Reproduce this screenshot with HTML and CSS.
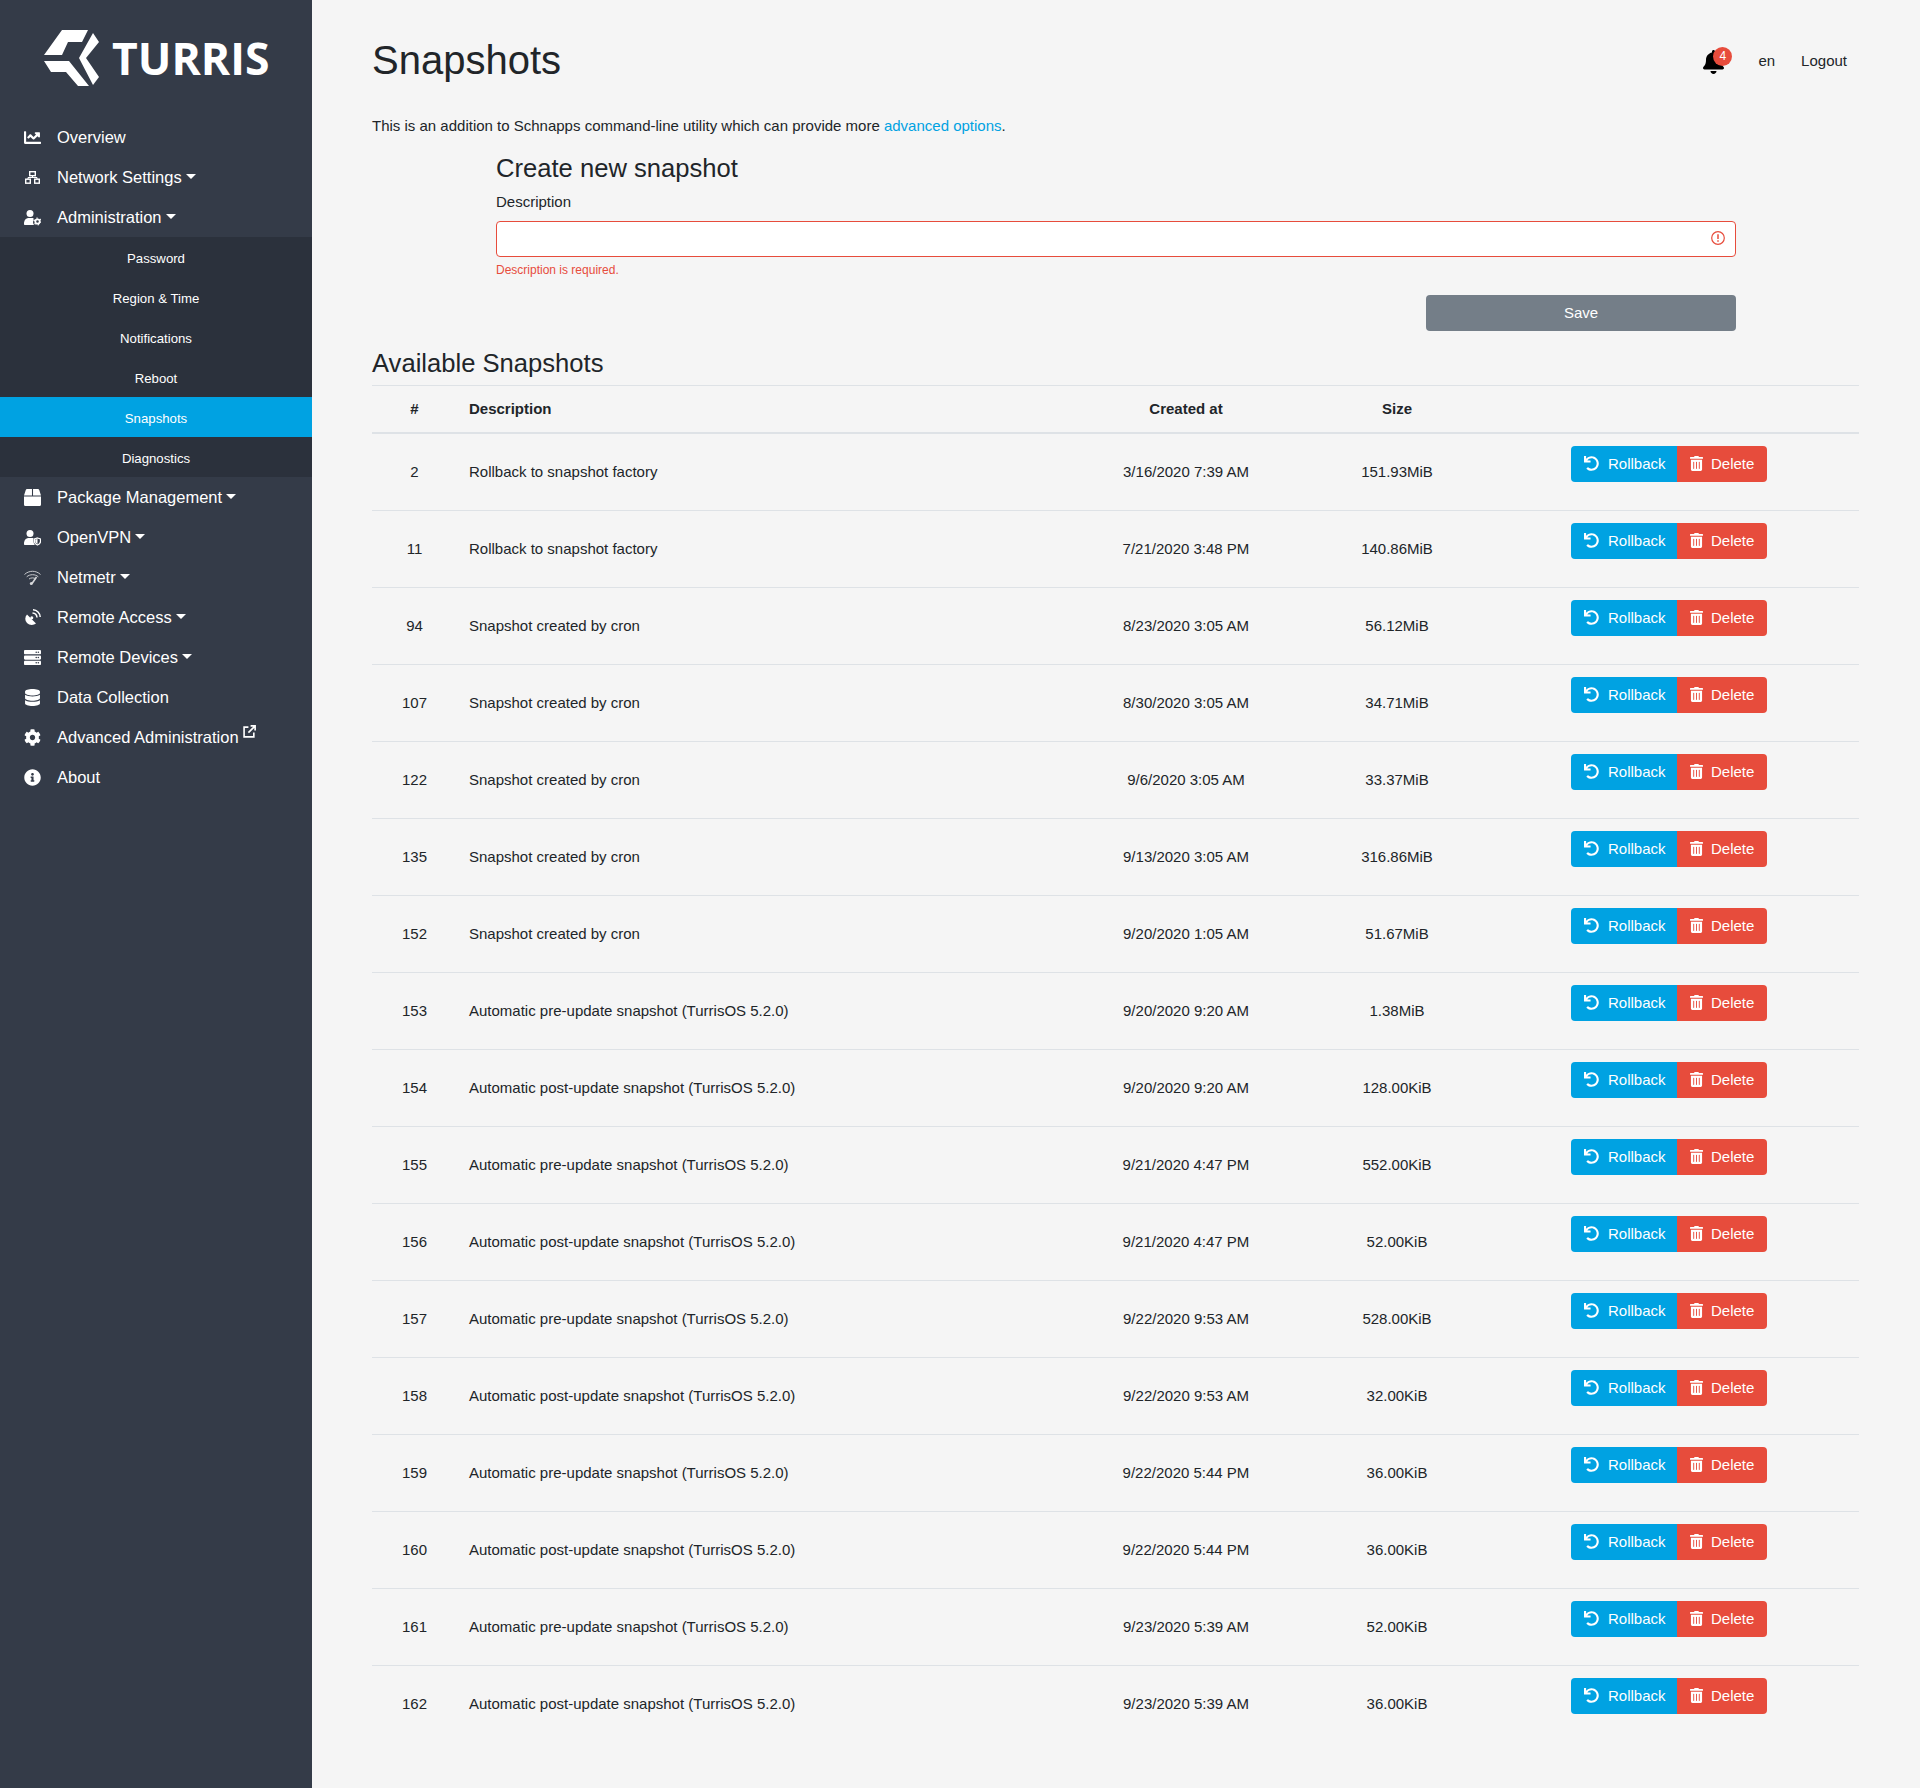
FILE: index.html
```html
<!DOCTYPE html>
<html lang="en">
<head>
    <meta charset="UTF-8">
    <title>Snapshots</title>
    <link rel="stylesheet" href="styles.css">
</head>
<body>
<svg class="sprites" width="0" height="0">
    <symbol id="i-undo" viewBox="0 0 512 512"><path d="M212.333 224.333H12c-6.627 0-12-5.373-12-12V12C0 5.373 5.373 0 12 0h48c6.627 0 12 5.373 12 12v78.112C117.773 39.279 184.26 7.47 258.175 8.007c136.906.994 246.448 111.623 246.157 248.532C504.041 393.258 393.12 504 256.333 504c-64.089 0-122.496-24.313-166.51-64.215-5.099-4.622-5.334-12.554-.467-17.42l33.967-33.967c4.474-4.474 11.662-4.717 16.401-.525C170.76 415.336 211.58 432 256.333 432c97.268 0 176-78.716 176-176 0-97.267-78.716-176-176-176-58.496 0-110.28 28.476-142.274 72.333h98.274c6.627 0 12 5.373 12 12v48c0 6.627-5.373 12-12 12z"/></symbol>
    <symbol id="i-trash" viewBox="0 0 448 512"><path d="M32 464a48 48 0 0 0 48 48h288a48 48 0 0 0 48-48V128H32zm272-256a16 16 0 0 1 32 0v224a16 16 0 0 1-32 0zm-96 0a16 16 0 0 1 32 0v224a16 16 0 0 1-32 0zm-96 0a16 16 0 0 1 32 0v224a16 16 0 0 1-32 0zM432 32H312l-9.4-18.7A24 24 0 0 0 281.1 0H166.8a23.72 23.72 0 0 0-21.4 13.3L136 32H16A16 16 0 0 0 0 48v32a16 16 0 0 0 16 16h416a16 16 0 0 0 16-16V48a16 16 0 0 0-16-16z"/></symbol>
</svg>

<aside class="sidebar">
    <a class="logo" href="#">
        <svg class="logo-mark" viewBox="0 0 56 58"><path d="M0 25L18 0H44L38 12H24L18 25Z"/><path d="M0 31H25L45 56H34L22 42H7Z"/><path d="M49 3L55 12L42 28L55 47L49 55L35 28Z"/></svg>
        <span class="logo-text">TURRIS</span>
    </a>
    <ul class="nav">
        <li><a href="#"><svg class="nav-icon" viewBox="0 0 512 512"><path d="M496 384H64V80c0-8.84-7.16-16-16-16H16C7.16 64 0 71.16 0 80v336c0 17.67 14.33 32 32 32h464c8.84 0 16-7.16 16-16v-32c0-8.84-7.16-16-16-16zM464 96H345.94c-21.38 0-32.09 25.85-16.97 40.97l32.4 32.4L288 242.75l-73.37-73.37c-12.5-12.5-32.76-12.5-45.25 0l-68.69 68.69c-6.25 6.25-6.25 16.38 0 22.63l22.62 22.62c6.25 6.25 16.38 6.25 22.63 0L192 237.25l73.37 73.37c12.5 12.5 32.76 12.5 45.25 0l96-96 32.4 32.4c15.12 15.12 40.97 4.41 40.97-16.97V112c.01-8.84-7.15-16-15.99-16z"/></svg>Overview</a></li>
        <li><a href="#" class="toggle"><svg class="nav-icon outline" viewBox="0 0 17 17" stroke="currentColor" stroke-width="1.400"><rect x="5.700" y="2.700" width="5.600" height="4"/><rect x="1.700" y="10.200" width="4.600" height="4"/><rect x="10.700" y="10.200" width="4.600" height="4"/><path stroke-width="1" d="M8.500 6.700v2M4 10V8.500h9V10"/></svg>Network Settings</a></li>
        <li><a href="#" class="toggle"><svg class="nav-icon" viewBox="0 0 17 17"><circle cx="6" cy="4.500" r="3.500"/><path d="M0 15c0-4 2-6 5-6h3c1 0 1.500.2 1.500.2v2.300c-.8 1.200-.5 3 .5 4.500H1c-.6 0-1-.4-1-1z"/><circle cx="13.500" cy="12.500" r="2.200" fill="none" stroke="currentColor" stroke-width="1.800"/><circle cx="13.500" cy="12.500" r="3.400" fill="none" stroke="currentColor" stroke-width="1.200" stroke-dasharray="1.400 2.200"/></svg>Administration</a></li>
        <li>
            <ul class="subnav">
                <li><a href="#">Password</a></li>
                <li><a href="#">Region &amp; Time</a></li>
                <li><a href="#">Notifications</a></li>
                <li><a href="#">Reboot</a></li>
                <li><a href="#" class="active">Snapshots</a></li>
                <li><a href="#">Diagnostics</a></li>
            </ul>
        </li>
        <li><a href="#" class="toggle"><svg class="nav-icon" viewBox="0 0 512 512"><path d="M509.5 184.6L458.9 32.8C452.4 13.2 434.1 0 413.4 0H272v192h238.7c-.4-2.5-.4-5-1.2-7.4zM240 0H98.6c-20.7 0-39 13.2-45.5 32.8L2.5 184.6c-.8 2.4-.8 4.9-1.2 7.4H240V0zM0 224v240c0 26.5 21.5 48 48 48h416c26.5 0 48-21.5 48-48V224H0z"/></svg>Package Management</a></li>
        <li><a href="#" class="toggle"><svg class="nav-icon" viewBox="0 0 17 17"><circle cx="6" cy="4.500" r="3.500"/><path d="M0 15c0-4 2-6 5-6h3c.8 0 1.500.2 1.500.2V12c0 1.500.5 3 1.500 4H1c-.6 0-1-.4-1-1z"/><path fill="none" stroke="currentColor" stroke-width="1.300" d="M13.500 9l3 1v2.500c0 1.500-1.300 2.800-3 3.500-1.700-.7-3-2-3-3.500V10z"/><path d="M13.500 10v5c-1-.6-2.200-1.500-2.200-2.700v-1.700z"/></svg>OpenVPN</a></li>
        <li><a href="#" class="toggle"><svg class="nav-icon outline dim" viewBox="0 0 17 17" stroke="currentColor" stroke-width=".9"><path d="M.5 5.500C5 1.200 12 1.200 16.500 5.500"/><path d="M2.700 7.800c3.200-2.800 8.400-2.800 11.600 0"/><path d="M5 10c2-1.500 5-1.500 7 0"/><path stroke-width="1.600" d="M12.500 8L8 14.500"/><circle cx="7.300" cy="14.500" r="1.500" fill="currentColor" stroke="none"/></svg>Netmetr</a></li>
        <li><a href="#" class="toggle"><svg class="nav-icon" viewBox="0 0 17 17"><path d="M3 5.500L12 14.500C9.500 16.500 5.500 16.500 3 14 .700 11.500.700 8 3 5.500z"/><circle cx="7.800" cy="8.800" r="1.500"/><path fill="none" stroke="currentColor" stroke-width="1.500" d="M8.500 4c2.500.2 4.300 2 4.500 4.500M9 .800c4 .2 7 3.200 7.200 7.200"/></svg>Remote Access</a></li>
        <li><a href="#" class="toggle"><svg class="nav-icon" viewBox="0 0 512 512"><path d="M480 160H32c-17.673 0-32-14.327-32-32V64c0-17.673 14.327-32 32-32h448c17.673 0 32 14.327 32 32v64c0 17.673-14.327 32-32 32zm-48-88c-13.255 0-24 10.745-24 24s10.745 24 24 24 24-10.745 24-24-10.745-24-24-24zm-64 0c-13.255 0-24 10.745-24 24s10.745 24 24 24 24-10.745 24-24-10.745-24-24-24zm112 248H32c-17.673 0-32-14.327-32-32v-64c0-17.673 14.327-32 32-32h448c17.673 0 32 14.327 32 32v64c0 17.673-14.327 32-32 32zm-48-88c-13.255 0-24 10.745-24 24s10.745 24 24 24 24-10.745 24-24-10.745-24-24-24zm-64 0c-13.255 0-24 10.745-24 24s10.745 24 24 24 24-10.745 24-24-10.745-24-24-24zm112 248H32c-17.673 0-32-14.327-32-32v-64c0-17.673 14.327-32 32-32h448c17.673 0 32 14.327 32 32v64c0 17.673-14.327 32-32 32zm-48-88c-13.255 0-24 10.745-24 24s10.745 24 24 24 24-10.745 24-24-10.745-24-24-24zm-64 0c-13.255 0-24 10.745-24 24s10.745 24 24 24 24-10.745 24-24-10.745-24-24-24z"/></svg>Remote Devices</a></li>
        <li><a href="#"><svg class="nav-icon" viewBox="0 0 448 512"><path d="M448 73.143v45.714C448 159.143 347.667 192 224 192S0 159.143 0 118.857V73.143C0 32.857 100.333 0 224 0s224 32.857 224 73.143zM448 176v102.857C448 319.143 347.667 352 224 352S0 319.143 0 278.857V176c48.125 33.143 136.208 48.572 224 48.572S399.874 209.143 448 176zm0 160v102.857C448 479.143 347.667 512 224 512S0 479.143 0 438.857V336c48.125 33.143 136.208 48.572 224 48.572S399.874 369.143 448 336z"/></svg>Data Collection</a></li>
        <li><a href="#"><svg class="nav-icon" viewBox="0 0 512 512"><path d="M487.4 315.7l-42.6-24.6c4.3-23.2 4.3-47 0-70.2l42.6-24.6c4.9-2.8 7.1-8.6 5.500-14-11.100-35.600-30-67.800-54.700-94.600-3.800-4.100-10-5.100-14.800-2.300L380.800 110c-17.900-15.400-38.500-27.300-60.800-35.100V25.800c0-5.600-3.900-10.500-9.400-11.700-36.700-8.200-74.300-7.800-109.200 0-5.500 1.200-9.400 6.100-9.400 11.700V75c-22.200 7.900-42.800 19.800-60.800 35.100L88.700 85.500c-4.900-2.800-11-1.900-14.800 2.300-24.700 26.700-43.600 58.900-54.700 94.600-1.700 5.400.6 11.200 5.500 14L67.300 221c-4.300 23.200-4.300 47 0 70.200l-42.600 24.600c-4.900 2.800-7.100 8.600-5.500 14 11.100 35.600 30 67.800 54.700 94.600 3.800 4.100 10 5.100 14.800 2.300l42.600-24.600c17.900 15.400 38.500 27.300 60.800 35.100v49.200c0 5.600 3.900 10.500 9.400 11.700 36.700 8.200 74.300 7.800 109.200 0 5.500-1.200 9.400-6.100 9.400-11.700v-49.200c22.200-7.900 42.800-19.800 60.800-35.100l42.600 24.600c4.900 2.800 11 1.900 14.800-2.300 24.700-26.700 43.600-58.900 54.700-94.600 1.500-5.500-.7-11.300-5.600-14.100zM256 336c-44.100 0-80-35.900-80-80s35.900-80 80-80 80 35.900 80 80-35.900 80-80 80z"/></svg>Advanced Administration<svg class="ext-icon" viewBox="0 0 12 12" fill="none" stroke="currentColor" stroke-width="1.500"><path d="M5 2H1v9h9V7"/><path d="M7 .8h4.200V5M11 1L5 7"/></svg></a></li>
        <li><a href="#"><svg class="nav-icon" viewBox="0 0 512 512"><path d="M256 8C119.043 8 8 119.083 8 256c0 136.997 111.043 248 248 248s248-111.003 248-248C504 119.083 392.957 8 256 8zm0 110c23.196 0 42 18.804 42 42s-18.804 42-42 42-42-18.804-42-42 18.804-42 42-42zm56 254c0 6.627-5.373 12-12 12h-88c-6.627 0-12-5.373-12-12v-24c0-6.627 5.373-12 12-12h12v-64h-12c-6.627 0-12-5.373-12-12v-24c0-6.627 5.373-12 12-12h64c6.627 0 12 5.373 12 12v100h12c6.627 0 12 5.373 12 12v24z"/></svg>About</a></li>
    </ul>
</aside>

<main class="content">
    <header class="page-head">
        <h1>Snapshots</h1>
        <div class="top-links">
            <span class="bell">
                <svg viewBox="0 0 448 512"><path d="M224 512c35.32 0 63.97-28.65 63.97-64H160.03c0 35.35 28.65 64 63.97 64zm215.39-149.71c-19.32-20.76-55.47-51.99-55.47-154.29 0-77.7-54.48-139.9-127.94-155.16V32c0-17.67-14.32-32-31.98-32s-31.98 14.33-31.98 32v20.84C118.56 68.1 64.08 130.3 64.08 208c0 102.3-36.15 133.53-55.47 154.29-6 6.45-8.66 14.16-8.61 21.71.11 16.4 12.98 32 32.1 32h383.8c19.12 0 32-15.6 32.1-32 .05-7.55-2.61-15.27-8.61-21.71z"/></svg>
                <span class="badge">4</span>
            </span>
            <a href="#">en</a>
            <a href="#">Logout</a>
        </div>
    </header>

    <p class="intro">This is an addition to Schnapps command-line utility which can provide more <a href="#">advanced options</a>.</p>

    <form class="create-form">
        <h3>Create new snapshot</h3>
        <label for="description">Description</label>
        <div class="input-wrap">
            <input type="text" id="description">
            <svg class="invalid-icon" viewBox="0 0 14 14" fill="none" stroke="#e74c3c" stroke-width="1.200"><circle cx="7" cy="7" r="6.300"/><path stroke-width="1.500" d="M7 3.200v4.800M7 9.300v1.500"/></svg>
        </div>
        <div class="invalid-text">Description is required.</div>
        <div class="form-actions"><button type="button" class="btn-save">Save</button></div>
    </form>

    <h3 class="list-title">Available Snapshots</h3>
    <table class="snapshots">
        <thead>
            <tr><th class="c-num">#</th><th class="c-desc">Description</th><th class="c-date">Created at</th><th class="c-size">Size</th><th class="c-actions"></th></tr>
        </thead>
        <tbody>
            <tr><td class="c-num">2</td><td class="c-desc">Rollback to snapshot factory</td><td class="c-date">3/16/2020 7:39 AM</td><td class="c-size">151.93MiB</td><td class="c-actions"><div class="btn-group"><button type="button" class="btn btn-rollback"><svg><use href="#i-undo"/></svg>Rollback</button><button type="button" class="btn btn-delete"><svg><use href="#i-trash"/></svg>Delete</button></div></td></tr>
            <tr><td class="c-num">11</td><td class="c-desc">Rollback to snapshot factory</td><td class="c-date">7/21/2020 3:48 PM</td><td class="c-size">140.86MiB</td><td class="c-actions"><div class="btn-group"><button type="button" class="btn btn-rollback"><svg><use href="#i-undo"/></svg>Rollback</button><button type="button" class="btn btn-delete"><svg><use href="#i-trash"/></svg>Delete</button></div></td></tr>
            <tr><td class="c-num">94</td><td class="c-desc">Snapshot created by cron</td><td class="c-date">8/23/2020 3:05 AM</td><td class="c-size">56.12MiB</td><td class="c-actions"><div class="btn-group"><button type="button" class="btn btn-rollback"><svg><use href="#i-undo"/></svg>Rollback</button><button type="button" class="btn btn-delete"><svg><use href="#i-trash"/></svg>Delete</button></div></td></tr>
            <tr><td class="c-num">107</td><td class="c-desc">Snapshot created by cron</td><td class="c-date">8/30/2020 3:05 AM</td><td class="c-size">34.71MiB</td><td class="c-actions"><div class="btn-group"><button type="button" class="btn btn-rollback"><svg><use href="#i-undo"/></svg>Rollback</button><button type="button" class="btn btn-delete"><svg><use href="#i-trash"/></svg>Delete</button></div></td></tr>
            <tr><td class="c-num">122</td><td class="c-desc">Snapshot created by cron</td><td class="c-date">9/6/2020 3:05 AM</td><td class="c-size">33.37MiB</td><td class="c-actions"><div class="btn-group"><button type="button" class="btn btn-rollback"><svg><use href="#i-undo"/></svg>Rollback</button><button type="button" class="btn btn-delete"><svg><use href="#i-trash"/></svg>Delete</button></div></td></tr>
            <tr><td class="c-num">135</td><td class="c-desc">Snapshot created by cron</td><td class="c-date">9/13/2020 3:05 AM</td><td class="c-size">316.86MiB</td><td class="c-actions"><div class="btn-group"><button type="button" class="btn btn-rollback"><svg><use href="#i-undo"/></svg>Rollback</button><button type="button" class="btn btn-delete"><svg><use href="#i-trash"/></svg>Delete</button></div></td></tr>
            <tr><td class="c-num">152</td><td class="c-desc">Snapshot created by cron</td><td class="c-date">9/20/2020 1:05 AM</td><td class="c-size">51.67MiB</td><td class="c-actions"><div class="btn-group"><button type="button" class="btn btn-rollback"><svg><use href="#i-undo"/></svg>Rollback</button><button type="button" class="btn btn-delete"><svg><use href="#i-trash"/></svg>Delete</button></div></td></tr>
            <tr><td class="c-num">153</td><td class="c-desc">Automatic pre-update snapshot (TurrisOS 5.2.0)</td><td class="c-date">9/20/2020 9:20 AM</td><td class="c-size">1.38MiB</td><td class="c-actions"><div class="btn-group"><button type="button" class="btn btn-rollback"><svg><use href="#i-undo"/></svg>Rollback</button><button type="button" class="btn btn-delete"><svg><use href="#i-trash"/></svg>Delete</button></div></td></tr>
            <tr><td class="c-num">154</td><td class="c-desc">Automatic post-update snapshot (TurrisOS 5.2.0)</td><td class="c-date">9/20/2020 9:20 AM</td><td class="c-size">128.00KiB</td><td class="c-actions"><div class="btn-group"><button type="button" class="btn btn-rollback"><svg><use href="#i-undo"/></svg>Rollback</button><button type="button" class="btn btn-delete"><svg><use href="#i-trash"/></svg>Delete</button></div></td></tr>
            <tr><td class="c-num">155</td><td class="c-desc">Automatic pre-update snapshot (TurrisOS 5.2.0)</td><td class="c-date">9/21/2020 4:47 PM</td><td class="c-size">552.00KiB</td><td class="c-actions"><div class="btn-group"><button type="button" class="btn btn-rollback"><svg><use href="#i-undo"/></svg>Rollback</button><button type="button" class="btn btn-delete"><svg><use href="#i-trash"/></svg>Delete</button></div></td></tr>
            <tr><td class="c-num">156</td><td class="c-desc">Automatic post-update snapshot (TurrisOS 5.2.0)</td><td class="c-date">9/21/2020 4:47 PM</td><td class="c-size">52.00KiB</td><td class="c-actions"><div class="btn-group"><button type="button" class="btn btn-rollback"><svg><use href="#i-undo"/></svg>Rollback</button><button type="button" class="btn btn-delete"><svg><use href="#i-trash"/></svg>Delete</button></div></td></tr>
            <tr><td class="c-num">157</td><td class="c-desc">Automatic pre-update snapshot (TurrisOS 5.2.0)</td><td class="c-date">9/22/2020 9:53 AM</td><td class="c-size">528.00KiB</td><td class="c-actions"><div class="btn-group"><button type="button" class="btn btn-rollback"><svg><use href="#i-undo"/></svg>Rollback</button><button type="button" class="btn btn-delete"><svg><use href="#i-trash"/></svg>Delete</button></div></td></tr>
            <tr><td class="c-num">158</td><td class="c-desc">Automatic post-update snapshot (TurrisOS 5.2.0)</td><td class="c-date">9/22/2020 9:53 AM</td><td class="c-size">32.00KiB</td><td class="c-actions"><div class="btn-group"><button type="button" class="btn btn-rollback"><svg><use href="#i-undo"/></svg>Rollback</button><button type="button" class="btn btn-delete"><svg><use href="#i-trash"/></svg>Delete</button></div></td></tr>
            <tr><td class="c-num">159</td><td class="c-desc">Automatic pre-update snapshot (TurrisOS 5.2.0)</td><td class="c-date">9/22/2020 5:44 PM</td><td class="c-size">36.00KiB</td><td class="c-actions"><div class="btn-group"><button type="button" class="btn btn-rollback"><svg><use href="#i-undo"/></svg>Rollback</button><button type="button" class="btn btn-delete"><svg><use href="#i-trash"/></svg>Delete</button></div></td></tr>
            <tr><td class="c-num">160</td><td class="c-desc">Automatic post-update snapshot (TurrisOS 5.2.0)</td><td class="c-date">9/22/2020 5:44 PM</td><td class="c-size">36.00KiB</td><td class="c-actions"><div class="btn-group"><button type="button" class="btn btn-rollback"><svg><use href="#i-undo"/></svg>Rollback</button><button type="button" class="btn btn-delete"><svg><use href="#i-trash"/></svg>Delete</button></div></td></tr>
            <tr><td class="c-num">161</td><td class="c-desc">Automatic pre-update snapshot (TurrisOS 5.2.0)</td><td class="c-date">9/23/2020 5:39 AM</td><td class="c-size">52.00KiB</td><td class="c-actions"><div class="btn-group"><button type="button" class="btn btn-rollback"><svg><use href="#i-undo"/></svg>Rollback</button><button type="button" class="btn btn-delete"><svg><use href="#i-trash"/></svg>Delete</button></div></td></tr>
            <tr><td class="c-num">162</td><td class="c-desc">Automatic post-update snapshot (TurrisOS 5.2.0)</td><td class="c-date">9/23/2020 5:39 AM</td><td class="c-size">36.00KiB</td><td class="c-actions"><div class="btn-group"><button type="button" class="btn btn-rollback"><svg><use href="#i-undo"/></svg>Rollback</button><button type="button" class="btn btn-delete"><svg><use href="#i-trash"/></svg>Delete</button></div></td></tr>
        </tbody>
    </table>
</main>
</body>
</html>
```

FILE: styles.css
```css
* {
    box-sizing: border-box;
}
body {
    margin: 0;
    min-height: 100vh;
    display: flex;
    font-family: "Liberation Sans", Arial, sans-serif;
    font-size: 15px;
    line-height: 21px;
    color: #212529;
    background: #f5f5f5;
}
a {
    text-decoration: none;
    color: inherit;
}
.sprites {
    position: absolute;
}

/* sidebar */
.sidebar {
    width: 312px;
    flex-shrink: 0;
    background: #343b48;
    color: #fff;
}
.logo {
    display: flex;
    align-items: center;
    height: 117px;
    padding-left: 44px;
}
.logo-mark {
    width: 56px;
    height: 58px;
    fill: #fff;
}
.logo-text {
    margin-left: 12px;
    font-family: "Open Sans", sans-serif;
    font-size: 44.5px;
    font-weight: 700;
    line-height: 1;
}
.nav, .subnav {
    list-style: none;
    margin: 0;
    padding: 0;
}
.nav > li > a {
    display: flex;
    align-items: center;
    height: 40px;
    padding-top: 1px;
    padding-left: 24px;
    font-size: 16.5px;
}
.nav-icon {
    width: 17px;
    height: 17px;
    margin-top: -1px;
    margin-right: 16px;
    flex-shrink: 0;
    fill: currentColor;
}
.nav-icon.outline {
    fill: none;
}
.nav-icon.dim {
    opacity: .8;
}
.toggle::after {
    content: "";
    margin-left: 4px;
    margin-bottom: 3px;
    border-top: 5px solid;
    border-left: 5px solid transparent;
    border-right: 5px solid transparent;
}
.ext-icon {
    width: 13px;
    height: 13px;
    margin: 0 0 12px 4px;
}
.subnav {
    background: #2b313c;
}
.subnav a {
    display: block;
    height: 40px;
    line-height: 43px;
    text-align: center;
    font-size: 13.2px;
}
.subnav a.active {
    background: #00a2e2;
}

/* main column */
.content {
    flex: 1;
    padding: 0 61px 0 60px;
}
.page-head {
    display: flex;
    justify-content: space-between;
    align-items: center;
    height: 115px;
    padding-top: 36px;
    padding-bottom: 31px;
}
h1 {
    margin: 0;
    font-size: 40px;
    font-weight: 400;
    line-height: 48px;
}
h3 {
    margin: 0;
    font-size: 25.6px;
    font-weight: 400;
    line-height: 31px;
}
.top-links {
    display: flex;
    align-items: center;
    margin-right: 12px;
    color: #212529;
}
.top-links a {
    margin-left: 26px;
}
.bell {
    position: relative;
    display: block;
    width: 24px;
    height: 24px;
    margin-top: 4px;
    margin-right: 5px;
}
.bell svg {
    display: block;
    width: 21px;
    height: 24px;
    fill: #000;
}
.badge {
    position: absolute;
    top: -3px;
    left: 10px;
    width: 19px;
    height: 19px;
    border-radius: 50%;
    background: #e74c3c;
    color: #fff;
    font-size: 12px;
    line-height: 19px;
    text-align: center;
}
.intro {
    margin: 0;
    height: 38px;
}
.intro a {
    color: #00a2e2;
}
.create-form {
    width: 1240px;
    margin-left: 124px;
}
.create-form label {
    display: block;
    margin-top: 7px;
    margin-bottom: 9px;
}
.input-wrap {
    position: relative;
}
.input-wrap input {
    display: block;
    width: 100%;
    height: 36px;
    border: 1px solid #e74c3c;
    border-radius: 4px;
    background: #fff;
}
.invalid-icon {
    position: absolute;
    top: 10px;
    right: 11px;
    width: 14px;
    height: 14px;
}
.invalid-text {
    margin-top: 5px;
    font-size: 12px;
    line-height: 17px;
    color: #e74c3c;
}
.form-actions {
    display: flex;
    justify-content: flex-end;
    margin-top: 16px;
}
.btn-save {
    width: 310px;
    height: 36px;
    padding-bottom: 2px;
    border: none;
    border-radius: 4px;
    background: #747e88;
    color: #fff;
    font: inherit;
}
.list-title {
    margin-top: 17px;
    height: 37px;
}

/* table */
.snapshots {
    width: 100%;
    border-collapse: collapse;
    table-layout: fixed;
}
.snapshots th, .snapshots td {
    padding: 12px;
    vertical-align: middle;
    border-top: 1px solid #dee2e6;
}
.snapshots th {
    height: 47px;
    font-weight: 700;
    border-bottom: 2px solid #dee2e6;
}
.snapshots td {
    height: 77px;
}
.c-num {
    width: 85px;
    text-align: center;
}
.c-desc {
    text-align: left;
}
.c-date {
    width: 200px;
    text-align: center;
}
.c-size {
    width: 222px;
    text-align: center;
}
.c-actions {
    width: 351px;
}
.snapshots td.c-actions {
    padding-left: 63px;
}
.btn-group {
    display: flex;
    margin-bottom: 16px;
}
.btn {
    display: flex;
    align-items: center;
    height: 36px;
    padding: 0 0 0 13px;
    border: none;
    color: #fff;
    font: inherit;
}
.btn svg {
    width: 15px;
    height: 15px;
    flex-shrink: 0;
    margin-right: 9px;
    fill: currentColor;
}
.btn-rollback {
    width: 106px;
    background: #00a2e2;
    border-radius: 4px 0 0 4px;
}
.btn-delete {
    width: 90px;
    background: #e74c3c;
    border-radius: 0 4px 4px 0;
}
.btn-delete svg {
    width: 13px;
    margin-right: 8px;
}
```
